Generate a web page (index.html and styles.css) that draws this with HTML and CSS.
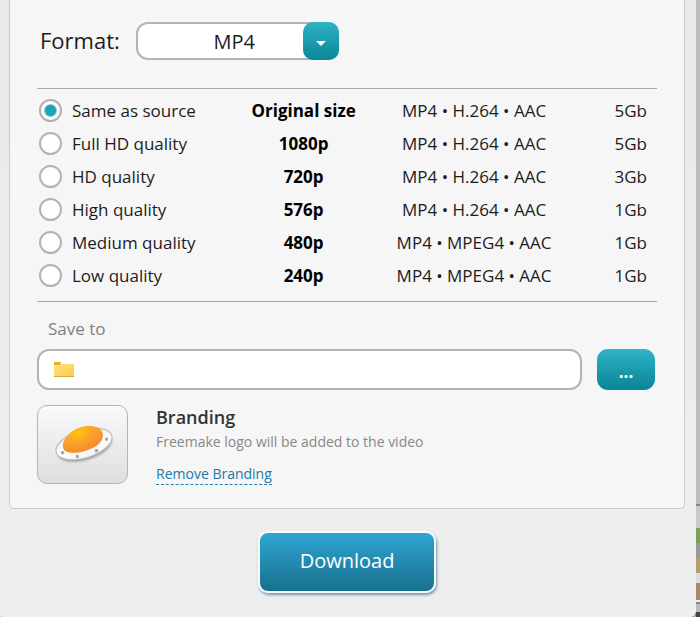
FILE: index.html
```html
<!DOCTYPE html>
<html lang="en">
<head>
<meta charset="utf-8">
<title>Download options</title>
<link rel="stylesheet" href="styles.css">
</head>
<body>
<main class="dialog">
  <form class="form">
    <section class="panel">
      <div class="format">
        <label class="format-label" for="format">Format:</label>
        <div class="select-wrap">
          <select class="select" id="format"><option>MP4</option></select>
          <span class="select-arrow" aria-hidden="true"></span>
        </div>
      </div>
      <div class="qualities">
        <table class="table">
          <colgroup><col class="col-name"><col class="col-size"><col class="col-codec"><col class="col-limit"></colgroup>
          <tbody>
          <tr><td><label class="option"><input class="radio" type="radio" name="quality" checked>Same as source</label></td><td class="size">Original size</td><td class="codec">MP4 • H.264 • AAC</td><td class="limit">5Gb</td></tr>
          <tr><td><label class="option"><input class="radio" type="radio" name="quality">Full HD quality</label></td><td class="size">1080p</td><td class="codec">MP4 • H.264 • AAC</td><td class="limit">5Gb</td></tr>
          <tr><td><label class="option"><input class="radio" type="radio" name="quality">HD quality</label></td><td class="size">720p</td><td class="codec">MP4 • H.264 • AAC</td><td class="limit">3Gb</td></tr>
          <tr><td><label class="option"><input class="radio" type="radio" name="quality">High quality</label></td><td class="size">576p</td><td class="codec">MP4 • H.264 • AAC</td><td class="limit">1Gb</td></tr>
          <tr><td><label class="option"><input class="radio" type="radio" name="quality">Medium quality</label></td><td class="size">480p</td><td class="codec">MP4 • MPEG4 • AAC</td><td class="limit">1Gb</td></tr>
          <tr><td><label class="option"><input class="radio" type="radio" name="quality">Low quality</label></td><td class="size">240p</td><td class="codec">MP4 • MPEG4 • AAC</td><td class="limit">1Gb</td></tr>
          </tbody>
        </table>
      </div>
      <label class="save-label" for="folder">Save to</label>
      <div class="save">
        <div class="path">
          <svg class="folder" viewBox="0 0 22 18" aria-hidden="true">
            <defs><linearGradient id="fold" x1="0" y1="0" x2="1" y2="1"><stop offset="0" stop-color="#ffe48a"/><stop offset="1" stop-color="#f7c94a"/></linearGradient></defs>
            <path d="M1 4V2q0-1 1-1h5q1 0 1 1v2z" fill="#e9b320"/>
            <rect x="1" y="3" width="20" height="13" rx="1" fill="url(#fold)"/>
            <path d="M1 4V2q0-1 1-1h5q1 0 1 1v1L7 4z" fill="#e6b422"/>
            <path d="M1 15.5h20" stroke="#d9a93a"/>
          </svg>
          <input class="path-input" id="folder" type="text">
        </div>
        <button class="browse" type="button">...</button>
      </div>
      <div class="branding">
        <div class="logo">
          <svg class="saucer" viewBox="0 0 64 44" aria-hidden="true">
            <defs>
              <radialGradient id="dome" cx=".45" cy=".22" r=".8"><stop offset="0" stop-color="#ffc60a"/><stop offset=".45" stop-color="#fda02c"/><stop offset="1" stop-color="#f58a2c"/></radialGradient>
              <linearGradient id="rim" x1="0" y1="0" x2="0" y2="1"><stop offset="0" stop-color="#e4e4e4"/><stop offset=".6" stop-color="#fff"/><stop offset="1" stop-color="#f2f2f2"/></linearGradient>
              <filter id="soft" x="-20%" y="-20%" width="140%" height="150%"><feGaussianBlur stdDeviation="1"/></filter>
            </defs>
            <g transform="rotate(-17 33 21)">
              <ellipse cx="33" cy="24" rx="28" ry="13" fill="#777" opacity=".7" filter="url(#soft)"/>
              <ellipse cx="33" cy="21" rx="29" ry="14" fill="url(#rim)" stroke="#b5b5b5"/>
              <path d="M12 18C13 11 23 4 34 4s20 5 20 12-8 12-21 12-22-4-21-10z" fill="url(#dome)"/>
              <g fill="#a5a5a8"><circle cx="10" cy="23" r="1.7"/><circle cx="23" cy="31" r="1.7"/><circle cx="43" cy="31" r="1.7"/><circle cx="56" cy="23" r="1.7"/></g>
            </g>
          </svg>
        </div>
        <div class="branding-text">
          <h2 class="branding-title">Branding</h2>
          <p class="branding-note">Freemake logo will be added to the video</p>
          <a class="branding-link" href="#">Remove Branding</a>
        </div>
      </div>
    </section>
    <div class="actions"><button class="download" type="submit">Download</button></div>
  </form>
</main>
<div class="backdrop" aria-hidden="true"></div>
</body>
</html>
```
FILE: styles.css
```css
* { box-sizing: border-box; }

body {
  margin: 0;
  min-height: 100vh;
  display: flex;
  font-family: "Open Sans", "Noto Sans", sans-serif;
  font-size: 17px;
  color: #1c1c1c;
  background: #c9c9c9;
}

.dialog {
  flex: 1;
  padding: 0 11px 24px 9px;
  background: linear-gradient(#e9e9e9, #efefef);
  border-radius: 0 0 6px 2px;
  box-shadow: 1px 0 2px #555;
}

.backdrop {
  width: 4px;
  background: linear-gradient(
    #bcbcbc 504px, #888 504px 506px, #c9c9c9 506px 528px,
    #7c9f5c 528px 543px, #999 543px 558px, #b99d70 558px 573px,
    #ddd 573px 583px, #ac8766 583px 600px, #eee 600px 602px,
    #888 602px 604px, #bbb 604px 612px, #444 612px);
}

.panel {
  padding: 22px 27px 23px;
  background: #f6f6f6;
  border: 1px solid #cbcbcb;
  border-top: 0;
  border-radius: 0 0 5px 5px;
}

.format {
  display: flex;
  gap: 16px;
  padding-left: 3px;
}

.format-label { font-size: 22px; line-height: 36px; }

.select-wrap { position: relative; width: 203px; height: 38px; }

.select {
  appearance: none;
  width: 100%;
  height: 38px;
  padding: 0 36px 0 30px;
  border: 2px solid #b4b4b4;
  border-radius: 12px;
  background: #fff;
  font: inherit;
  font-size: 20px;
  color: inherit;
  text-align: center;
  text-align-last: center;
}

.select-arrow {
  position: absolute;
  top: 0;
  right: 0;
  width: 36px;
  height: 38px;
  display: grid;
  place-items: center;
  border-radius: 10px;
  background: linear-gradient(#2db2c6, #0c8799);
  pointer-events: none;
}

.select-arrow::after {
  content: "";
  margin-top: 4px;
  border: 5px solid transparent;
  border-top-color: #fff;
  border-bottom: 0;
}

.qualities {
  margin-top: 28px;
  padding: 5px 0 9px;
  border-top: 1px solid #aaa;
  border-bottom: 1px solid #aaa;
}

.table {
  width: 100%;
  table-layout: fixed;
  border-collapse: collapse;
}

.col-name { width: 30%; }
.col-size { width: 26%; }
.col-codec { width: 29%; }

.table td { height: 33px; padding: 0; white-space: nowrap; }

.option {
  display: flex;
  align-items: center;
  gap: 10px;
  padding-left: 2px;
}

.radio {
  appearance: none;
  flex: none;
  width: 23px;
  height: 23px;
  margin: 0;
  border: 2px solid #b5b2b2;
  border-radius: 50%;
  background: #fff;
}

.radio:checked {
  border-color: #b9abac;
  background: radial-gradient(circle, #20a3b4 5px, #fff 7px);
}

.size { font-weight: 700; color: #000; text-align: center; }
.codec { text-align: center; }
.table .limit { padding-right: 10px; text-align: right; }

.save-label {
  display: block;
  margin: 15px 0 8px 11px;
  font-size: 17px;
  line-height: 24px;
  color: #808080;
}

.save { display: flex; gap: 15px; padding-right: 2px; }

.path {
  flex: 1;
  display: flex;
  align-items: center;
  gap: 8px;
  height: 41px;
  padding: 0 14px;
  border: 2px solid #b4b4b4;
  border-radius: 12px;
  background: #fff;
}

.folder { width: 22px; height: 18px; }

.path-input {
  flex: 1;
  min-width: 0;
  border: 0;
  outline: 0;
  background: transparent;
  font: inherit;
}

.browse {
  width: 58px;
  height: 41px;
  padding: 4px 0 0;
  border: 0;
  border-radius: 11px;
  background: linear-gradient(#2eb3c7, #0a8496);
  font: inherit;
  font-weight: 700;
  color: #fff;
}

.branding { display: flex; gap: 28px; margin-top: 15px; }

.logo {
  width: 91px;
  height: 79px;
  display: grid;
  place-items: center;
  border: 1px solid #b4b4b4;
  border-radius: 10px;
  background: linear-gradient(#fafafa, #dedede);
}

.saucer { width: 64px; height: 44px; }

.branding-text { display: flex; flex-direction: column; align-items: flex-start; }
.branding-title { margin: 0; font-size: 18px; font-weight: 600; line-height: 24px; color: #333; }
.branding-note { margin: 0 0 8px; font-size: 14px; line-height: 26px; color: #888; }

.branding-link {
  border-bottom: 1px dashed #2980a8;
  font-size: 14px;
  line-height: 21px;
  color: #2079a8;
  text-decoration: none;
}

.actions { display: flex; justify-content: center; margin-top: 22px; }

.download {
  width: 178px;
  height: 62px;
  padding: 0 0 4px;
  border: 2px solid #f5fdff;
  border-radius: 10px;
  background: linear-gradient(#2ea5d2, #18708f);
  box-shadow: 1px 2px 3px #7196b0;
  font: inherit;
  font-size: 20px;
  color: #fff;
}
```
